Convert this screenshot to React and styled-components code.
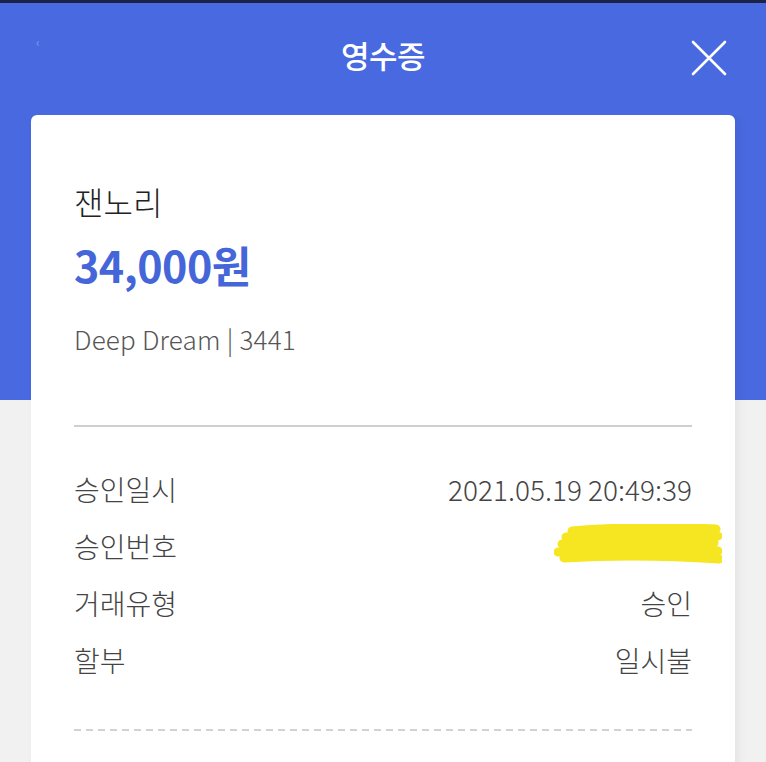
import React from "react";
import styled, { createGlobalStyle } from "styled-components";

const GlobalStyle = createGlobalStyle`
  html, body {
    margin: 0;
    padding: 0;
    overflow: hidden;
    background: #f1f1f1;
  }
  body {
    font-family: "Noto Sans CJK KR", "Noto Sans", sans-serif;
  }
`;

const rows = [
  { label: "승인일시", value: "2021.05.19 20:49:39" },
  { label: "승인번호", value: null },
  { label: "거래유형", value: "승인" },
  { label: "할부", value: "일시불" },
];

const App = () => {
  return (
    <Page>
      <GlobalStyle />
      <StatusEdge />
      <TitleBar>
        <BackMark>‹</BackMark>
        <Title>영수증</Title>
        <CloseButton aria-label="닫기">
          <svg width="36" height="36" viewBox="0 0 36 36">
            <path
              d="M2 2 L34 34 M34 2 L2 34"
              stroke="#ffffff"
              strokeWidth="2.6"
              strokeLinecap="round"
            />
          </svg>
        </CloseButton>
      </TitleBar>
      <Body>
        <Card>
          <Store>잰노리</Store>
          <Amount>34,000원</Amount>
          <CardInfo>Deep Dream | 3441</CardInfo>
          <Divider />
          <Rows>
            {rows.map((row) => (
              <Row key={row.label}>
                <Label>{row.label}</Label>
                {row.value ? (
                  <Value>{row.value}</Value>
                ) : (
                  <Scribble width="168" height="40" viewBox="0 0 168 40">
                    <path
                      d="M18 7 C60 3 120 3 162 5 M12 13 C60 10 120 10 164 12 M8 20 C60 17 120 17 160 19 M4 28 C60 24 120 25 164 27 M10 34 C60 31 120 32 165 35"
                      stroke="#f6e622"
                      strokeWidth="9"
                      strokeLinecap="round"
                      fill="none"
                    />
                  </Scribble>
                )}
              </Row>
            ))}
          </Rows>
          <DashedLine />
        </Card>
      </Body>
    </Page>
  );
};

export default App;

const Page = styled.div`
  width: 766px;
  height: 762px;
  overflow: hidden;
  background: #f1f1f1;
`;

const StatusEdge = styled.div`
  height: 3px;
  background: #1c2148;
`;

const TitleBar = styled.header`
  display: flex;
  align-items: center;
  justify-content: center;
  position: relative;
  height: 112px;
  padding-bottom: 10px;
  box-sizing: border-box;
  background: #4869e0;
`;

const BackMark = styled.span`
  position: absolute;
  left: 36px;
  top: 30px;
  color: rgba(255, 255, 255, 0.35);
  font-size: 12px;
`;

const Title = styled.h1`
  margin: 0;
  color: #ffffff;
  font-size: 31px;
  font-weight: 500;
  letter-spacing: -0.5px;
`;

const CloseButton = styled.button`
  position: absolute;
  right: 39px;
  top: 37px;
  display: flex;
  padding: 0;
  border: none;
  background: transparent;
`;

const Body = styled.main`
  padding: 0 31px;
  background: linear-gradient(#4869e0 0, #4869e0 285px, #f1f1f1 285px);
`;

const Card = styled.section`
  display: flex;
  flex-direction: column;
  min-height: 700px;
  padding: 64px 43px 0;
  border-radius: 6px 6px 0 0;
  background: #ffffff;
  box-shadow: 4px 0 10px rgba(0, 0, 0, 0.05);
`;

const Store = styled.div`
  color: #222222;
  font-size: 32px;
  font-weight: 300;
  line-height: 44px;
`;

const Amount = styled.div`
  margin-top: 12px;
  color: #4466d9;
  font-size: 43px;
  font-weight: 700;
  line-height: 58px;
  letter-spacing: -0.5px;
`;

const CardInfo = styled.div`
  margin-top: 28px;
  color: #555555;
  font-size: 26px;
  font-weight: 300;
  line-height: 36px;
  letter-spacing: 0.2px;
`;

const Divider = styled.hr`
  margin: 68px 0 0;
  border: none;
  height: 2px;
  background: #cfcfcf;
`;

const Rows = styled.div`
  display: flex;
  flex-direction: column;
  margin-top: 33px;
`;

const Row = styled.div`
  display: flex;
  align-items: center;
  justify-content: space-between;
  height: 57px;
`;

const Label = styled.span`
  color: #444444;
  font-size: 28px;
  font-weight: 300;
`;

const Value = styled.span`
  color: #444444;
  font-size: 28px;
  font-weight: 300;
  letter-spacing: 0;
`;

const Scribble = styled.svg`
  margin-right: -30px;
  margin-top: -4px;
`;

const DashedLine = styled.div`
  margin-top: 41px;
  height: 2px;
  background: repeating-linear-gradient(
    90deg,
    #d2d2d2 0,
    #d2d2d2 7px,
    transparent 7px,
    transparent 12px
  );
`;
